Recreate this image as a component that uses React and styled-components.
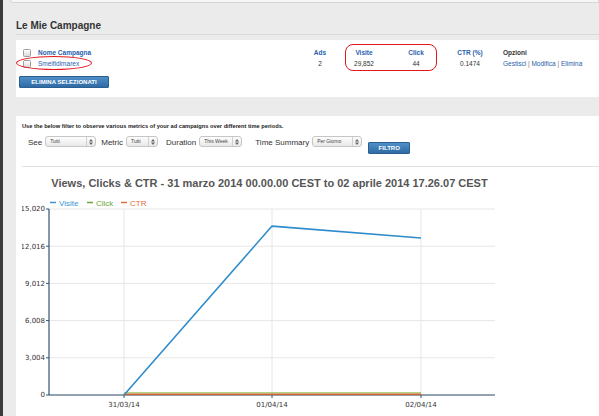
import React from 'react';
import styled, { createGlobalStyle } from 'styled-components';

const GlobalStyle = createGlobalStyle`
  html, body {
    margin: 0;
    padding: 0;
    background: #ebebeb;
    font-family: "Liberation Sans", Arial, sans-serif;
  }
`;

const Page = styled.div`
  display: flex;
  flex-direction: column;
  height: 416px;
  overflow: hidden;
  box-sizing: border-box;
  border-left: 3px solid #3b3b3b;
  padding-left: 13px;
  background: #ebebeb;
`;

const TopStub = styled.div`
  height: 2px;
  margin-left: -6px;
  background: #f6f6f6;
  border: 1px solid #d6d6d6;
  border-top: none;
  border-radius: 0 0 0 3px;
`;

const Header = styled.div`
  height: 32px;
  display: flex;
  align-items: flex-end;
  padding-bottom: 3px;
  box-sizing: border-box;
  border-bottom: 1px solid #d9d9d9;
  margin-bottom: 5px;
`;

const PageTitle = styled.h1`
  margin: 0;
  font-size: 10px;
  font-weight: bold;
  color: #333;
  line-height: 11px;
`;

const Panel = styled.div`
  background: #fff;
  position: relative;
  box-sizing: border-box;
`;

const CampaignPanel = styled(Panel)`
  height: 57px;
  padding: 7px 0 0 3px;
  margin-bottom: 19px;
`;

const ReportPanel = styled(Panel)`
  flex: 1;
  padding: 6px 0 0 6px;
`;

const Table = styled.div`
  display: grid;
  grid-template-columns: 15px 264px 36px 52px 52px 56px auto;
  grid-auto-rows: 11px;
  padding-left: 4px;
  font-size: 6.5px;
  align-items: center;
`;

const Cell = styled.div`
  text-align: ${p => (p.$center ? 'center' : 'left')};
  padding-left: ${p => (p.$pad ? '5px' : '0')};
  color: ${p => (p.$link ? '#2761ad' : '#333')};
  font-weight: ${p => (p.$head ? 'bold' : 'normal')};
  white-space: nowrap;
`;

const Sep = styled.span`
  color: #777;
`;

const Checkbox = styled.span`
  display: block;
  width: 6px;
  height: 6px;
  border: 1px solid #9c9c9c;
  border-radius: 1.5px;
  background: linear-gradient(#ffffff, #d9d9d9);
`;

const BlueButton = styled.button`
  display: block;
  height: 12px;
  width: ${p => p.$width}px;
  margin-top: ${p => p.$top || 0}px;
  padding: 0;
  border: 1px solid #2b5e91;
  border-radius: 1px;
  background: linear-gradient(#4f8fc8, #2f6ba5);
  color: #fff;
  font-family: "Liberation Sans", Arial, sans-serif;
  font-size: 6px;
  font-weight: bold;
  line-height: 10px;
  text-transform: uppercase;
`;

const Mark = styled.div`
  position: absolute;
  left: ${p => p.$x}px;
  top: ${p => p.$y}px;
  width: ${p => p.$w}px;
  height: ${p => p.$h}px;
  box-sizing: border-box;
  border: 1.5px solid #e3161c;
  border-radius: ${p => p.$r};
  pointer-events: none;
`;

const Intro = styled.p`
  margin: 0;
  font-size: 5.7px;
  line-height: 8px;
  font-weight: bold;
  color: #222;
`;

const FilterRow = styled.div`
  display: flex;
  align-items: flex-start;
  height: 20px;
  margin-top: 6px;
  padding-left: 6px;
`;

const FilterLabel = styled.span`
  font-size: 8px;
  line-height: 14px;
  color: #333;
  margin-right: 3px;
`;

const Select = styled.div`
  display: flex;
  width: ${p => p.$width}px;
  height: 11px;
  margin-right: ${p => p.$after}px;
  box-sizing: border-box;
  border: 1px solid #c6c6c6;
  border-radius: 3px;
  background: linear-gradient(#fdfdfd, #e9e9e9);
  font-size: 5px;
  color: #444;
`;

const SelectText = styled.span`
  flex: 1;
  padding-left: 4px;
  line-height: 9px;
  white-space: nowrap;
  overflow: hidden;
`;

const SelectArrow = styled.span`
  width: 8px;
  display: flex;
  align-items: center;
  justify-content: center;
  border-left: 1px solid #d0d0d0;
`;

const Divider = styled.div`
  margin-top: 10px;
  border-top: 1px solid #e2e2e2;
`;

const ChartTitle = styled.h2`
  margin: 10px 0 0 22px;
  width: 451px;
  text-align: center;
  font-size: 11px;
  line-height: 13px;
  font-weight: bold;
  color: #555;
`;

const ChartSvg = styled.svg`
  display: block;
  margin-top: 4px;
`;

const columns = ['Ads', 'Visite', 'Click', 'CTR (%)'];

const filters = [
  { label: 'See', value: 'Tutti', width: 51, after: 5 },
  { label: 'Metric', value: 'Tutti', width: 32, after: 8 },
  { label: 'Duration', value: 'This Week', width: 43, after: 13 },
  { label: 'Time Summary', value: 'Per Giorno', width: 50, after: 6 },
];

function UpDown() {
  return (
    <svg width="4" height="6" viewBox="0 0 4 6">
      <path d="M0 2.4 L2 0 L4 2.4 Z M0 3.6 L2 6 L4 3.6 Z" fill="#666" />
    </svg>
  );
}

// plot area, in page coordinates (viewBox is offset to match)
const LEFT = 49;
const RIGHT = 495;
const TOP = 211;
const BOTTOM = 397;
const MAX = 15020;
const yTicks = [15020, 12016, 9012, 6008, 3004, 0];
const days = [
  { label: '31/03/14', x: 124 },
  { label: '01/04/14', x: 272 },
  { label: '02/04/14', x: 421 },
];
const visite = [0, 13640, 12680];
const y = v => BOTTOM - (v / MAX) * (BOTTOM - TOP);

const legend = [
  { name: 'Visite', color: '#3b95d6', x: 50 },
  { name: 'Click', color: '#6aa636', x: 87 },
  { name: 'CTR', color: '#df6d3c', x: 121 },
];

function Chart() {
  const line = visite.map((v, i) => `${days[i].x},${y(v)}`).join(' ');
  const flat = off => days.map(d => `${d.x},${BOTTOM - off}`).join(' ');
  return (
    <ChartSvg width="577" height="220" viewBox="22 196 577 220">
      {legend.map(l => (
        <g key={l.name}>
          <line x1={l.x} x2={l.x + 6} y1="204.5" y2="204.5" stroke={l.color} strokeWidth="1.5" />
          <text x={l.x + 9} y="207.5" fontSize="8" fill={l.color} fontFamily="Liberation Sans, Arial, sans-serif">
            {l.name}
          </text>
        </g>
      ))}
      {yTicks.map(t => (
        <g key={t}>
          <line x1={LEFT} x2={RIGHT} y1={y(t)} y2={y(t)} stroke="#e6e6e6" />
          <line x1={LEFT - 3} x2={LEFT} y1={y(t)} y2={y(t)} stroke="#34526f" />
          <text x={LEFT - 4} y={y(t) + 2.4} fontSize="7" textAnchor="end" fill="#333" fontFamily="DejaVu Sans, sans-serif">
            {t.toLocaleString('en-US')}
          </text>
        </g>
      ))}
      {days.map(d => (
        <g key={d.label}>
          <line x1={d.x} x2={d.x} y1={TOP} y2={BOTTOM} stroke="#e6e6e6" />
          <line x1={d.x} x2={d.x} y1={BOTTOM} y2={BOTTOM + 3} stroke="#34526f" />
          <text x={d.x} y="408.5" fontSize="7" textAnchor="middle" fill="#333" fontFamily="DejaVu Sans, sans-serif">
            {d.label}
          </text>
        </g>
      ))}
      <line x1={LEFT} x2={LEFT} y1={TOP} y2={BOTTOM} stroke="#34526f" strokeWidth="1.2" />
      <line x1={LEFT} x2={RIGHT} y1={BOTTOM} y2={BOTTOM} stroke="#34526f" strokeWidth="1.2" />
      <polyline points={flat(2.2)} fill="none" stroke="#8cc05a" strokeWidth="1" />
      <polyline points={flat(0.8)} fill="none" stroke="#d4602a" strokeWidth="1.6" />
      <polyline points={line} fill="none" stroke="#2f8ccc" strokeWidth="1.6" strokeLinejoin="round" />
    </ChartSvg>
  );
}

export default function App() {
  return (
    <>
      <GlobalStyle />
      <Page>
        <TopStub />
        <Header>
          <PageTitle>Le Mie Campagne</PageTitle>
        </Header>

        <CampaignPanel>
          <Table>
            <Checkbox />
            <Cell $head $link>Nome Campagna</Cell>
            {columns.map(c => (
              <Cell key={c} $head $link $center>{c}</Cell>
            ))}
            <Cell $head $pad>Opzioni</Cell>

            <Checkbox />
            <Cell $link>Smeifidimarex</Cell>
            <Cell $center>2</Cell>
            <Cell $center>29,852</Cell>
            <Cell $center>44</Cell>
            <Cell $center>0.1474</Cell>
            <Cell $pad $link>
              Gestisci <Sep>|</Sep> Modifica <Sep>|</Sep> Elimina
            </Cell>
          </Table>
          <BlueButton $width={90} $top={7}>Elimina Selezionati</BlueButton>
          <Mark $x={0} $y={16} $w={76} $h={14} $r="50%" />
          <Mark $x={329} $y={4} $w={92} $h={27} $r="8px" />
        </CampaignPanel>

        <ReportPanel>
          <Intro>
            Use the below filter to observe various metrics of your ad campaigns over different time periods.
          </Intro>
          <FilterRow>
            {filters.map(f => (
              <React.Fragment key={f.label}>
                <FilterLabel>{f.label}</FilterLabel>
                <Select $width={f.width} $after={f.after}>
                  <SelectText>{f.value}</SelectText>
                  <SelectArrow>
                    <UpDown />
                  </SelectArrow>
                </Select>
              </React.Fragment>
            ))}
            <BlueButton $width={42} $top={6}>Filtro</BlueButton>
          </FilterRow>
          <Divider />
          <ChartTitle>Views, Clicks &amp; CTR - 31 marzo 2014 00.00.00 CEST to 02 aprile 2014 17.26.07 CEST</ChartTitle>
          <Chart />
        </ReportPanel>
      </Page>
    </>
  );
}
